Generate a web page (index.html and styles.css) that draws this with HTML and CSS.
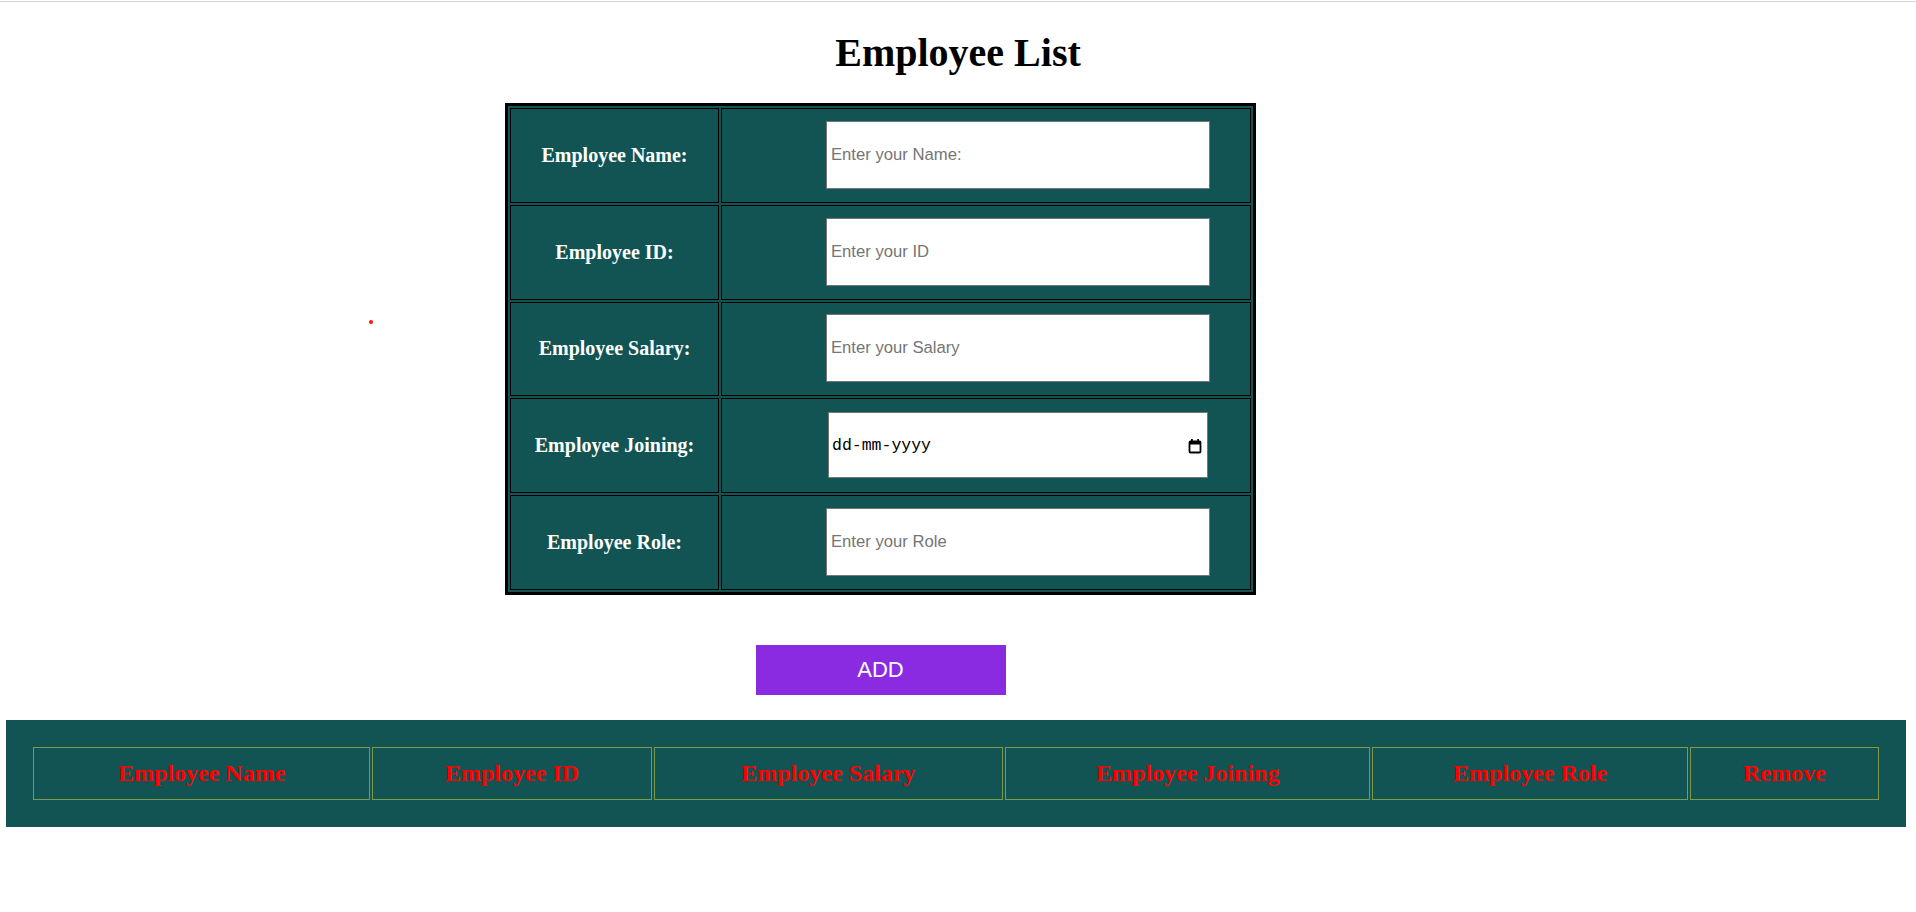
FILE: index.html
```html
<!DOCTYPE html>
<html lang="en">
<head>
<meta charset="utf-8">
<title>Employee List</title>
<link rel="stylesheet" href="styles.css">
</head>
<body>
<div class="topline"></div>
<span class="dot"></span>
<h1 class="title">Employee List</h1>
<div class="form-wrap">
  <table class="form-table">
    <tr>
      <td class="label">Employee Name:</td>
      <td class="field"><input class="text-input" type="text" placeholder="Enter your Name:"></td>
    </tr>
    <tr>
      <td class="label">Employee ID:</td>
      <td class="field"><input class="text-input" type="text" placeholder="Enter your ID"></td>
    </tr>
    <tr>
      <td class="label">Employee Salary:</td>
      <td class="field"><input class="text-input" type="text" placeholder="Enter your Salary"></td>
    </tr>
    <tr>
      <td class="label">Employee Joining:</td>
      <td class="field">
        <div class="date-input">
          <span class="date-text">dd-mm-yyyy</span>
          <svg class="cal-icon" width="14" height="16" viewBox="0 0 14 16" aria-hidden="true">
            <rect x="1.5" y="3.5" width="11" height="11" rx="1" fill="none" stroke="#000" stroke-width="1.8"/>
            <rect x="1.5" y="3.5" width="11" height="3" fill="#000"/>
            <rect x="3" y="1" width="1.8" height="3" fill="#000"/>
            <rect x="9.2" y="1" width="1.8" height="3" fill="#000"/>
          </svg>
        </div>
      </td>
    </tr>
    <tr>
      <td class="label">Employee Role:</td>
      <td class="field"><input class="text-input" type="text" placeholder="Enter your Role"></td>
    </tr>
  </table>
  <div class="actions">
    <button class="add-btn" type="button">ADD</button>
  </div>
</div>
<div class="list-panel">
  <table class="list-table">
    <thead>
      <tr>
        <th class="c-name">Employee Name</th>
        <th class="c-id">Employee ID</th>
        <th class="c-salary">Employee Salary</th>
        <th class="c-join">Employee Joining</th>
        <th class="c-role">Employee Role</th>
        <th class="c-remove">Remove</th>
      </tr>
    </thead>
  </table>
</div>
</body>
</html>
```
FILE: styles.css
```css
html, body {
  margin: 0;
  padding: 0;
  background: #ffffff;
}

body {
  position: relative;
  font-family: "Liberation Serif", "Times New Roman", serif;
  color: #000;
}

.topline {
  margin-top: 1px;
  height: 1px;
  background: #d4d4d4;
}

.dot {
  position: absolute;
  left: 369px;
  top: 320px;
  width: 4px;
  height: 4px;
  border-radius: 50%;
  background: #ff1010;
}

.title {
  margin: 28px 0 27px;
  font-size: 40px;
  line-height: 46px;
  font-weight: bold;
  text-align: center;
}

.form-wrap {
  width: 751px;
  margin-left: 505px;
}

.form-table {
  width: 751px;
  border: 3px solid #000;
  border-spacing: 2px;
  background: #115453;
}

.form-table td {
  height: 94.8px;
  box-sizing: border-box;
  border: 1px solid #000;
  padding: 0;
  vertical-align: middle;
}

.form-table td.label {
  width: 209px;
  color: #ffffff;
  font-size: 20px;
  font-weight: bold;
  text-align: center;
}

.form-table td.field {
  padding-left: 104px;
}

.text-input {
  display: block;
  width: 384px;
  height: 68px;
  box-sizing: border-box;
  margin: -1px 0 0;
  border: 1px solid #767676;
  padding: 0 4px;
  background: #fff;
  font-family: "Liberation Sans", Arial, sans-serif;
  font-size: 16.67px;
  color: #000;
  outline: none;
}

.text-input::placeholder {
  color: #757575;
}

.date-input {
  display: flex;
  align-items: center;
  justify-content: space-between;
  width: 380px;
  height: 66px;
  margin: -1px 0 0 2px;
  box-sizing: border-box;
  border: 1px solid #767676;
  padding: 0 5px 0 3px;
  background: #fff;
  font-family: "Liberation Mono", "DejaVu Sans Mono", monospace;
  font-size: 16.5px;
  color: #000;
}

.cal-icon {
  display: block;
  margin-top: 2px;
}

.actions {
  display: flex;
  justify-content: center;
  margin-top: 50px;
}

.add-btn {
  width: 250px;
  height: 50px;
  border: none;
  padding: 0;
  background: #8a2be2;
  color: #ffffff;
  font-family: "Liberation Sans", Arial, sans-serif;
  font-size: 22px;
  cursor: pointer;
}

.list-panel {
  width: 1900px;
  margin: 25px 0 0 6px;
  padding: 25px;
  box-sizing: border-box;
  background: #115453;
}

.list-table {
  width: 100%;
  table-layout: fixed;
  border-spacing: 2px;
}

.list-table th {
  height: 53px;
  box-sizing: border-box;
  border: 1px solid #7b9b46;
  padding: 0;
  color: #ff0000;
  font-size: 24px;
  font-weight: bold;
  text-align: center;
}

.c-name { width: 337px; }
.c-id { width: 279px; }
.c-salary { width: 349px; }
.c-join { width: 365px; }
.c-role { width: 315px; }
.c-remove { width: 189px; }
```
